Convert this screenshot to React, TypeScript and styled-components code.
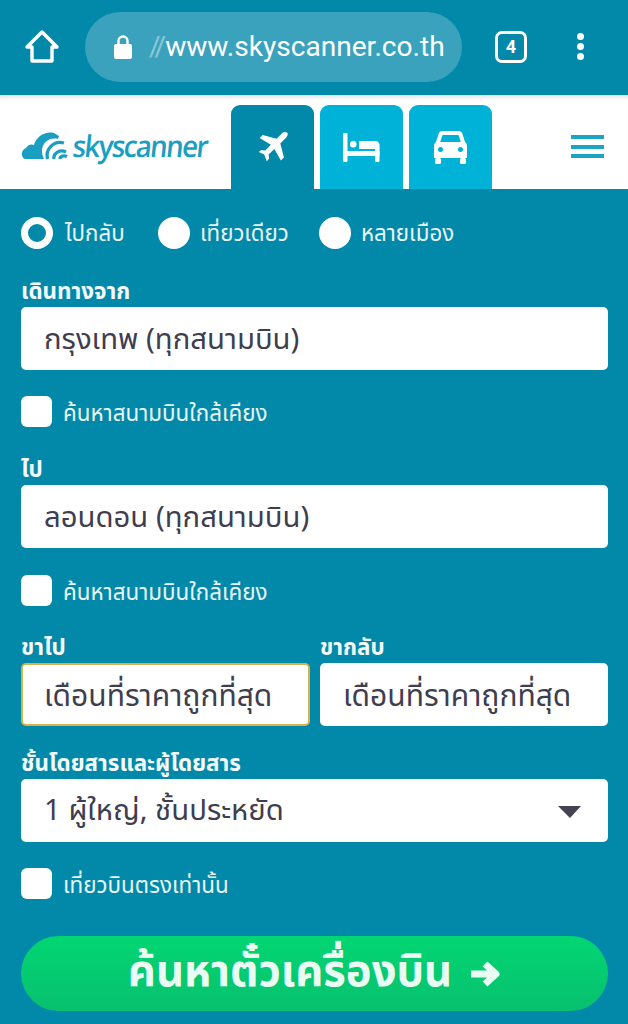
import React from "react";
import styled, { createGlobalStyle } from "styled-components";

const FONT = `"Noto Sans Thai", "Noto Sans Thai UI", "Noto Sans", "Open Sans", "DejaVu Sans", sans-serif`;

const Global = createGlobalStyle`
  html, body { margin: 0; padding: 0; background: #0289a9; }
  * { box-sizing: border-box; }
  body { font-family: ${FONT}; }
`;

const Page = styled.div`
  width: 628px;
  height: 1024px;
  overflow: hidden;
  background: #0289a9;
  display: flex;
  flex-direction: column;
`;

const BrowserBar = styled.div`
  height: 95px;
  flex: none;
  display: flex;
  align-items: center;
  padding: 0 0 2px 24px;
  background: #0289a9;
  color: #fff;
`;

const HomeSlot = styled.div`
  width: 36px;
  height: 36px;
  flex: none;
  margin-right: 25px;
`;

const UrlPill = styled.div`
  width: 377px;
  height: 70px;
  flex: none;
  border-radius: 35px;
  background: #3aa2bc;
  display: flex;
  align-items: center;
  padding-left: 28px;
  font: 400 28.1px "Roboto", sans-serif;
  color: #fff;
  white-space: nowrap;
`;

const Fade = styled.span`
  opacity: 0.4;
  margin-left: 16px;
  letter-spacing: -3px;
  margin-right: 2px;
`;

const TabCount = styled.div`
  width: 32px;
  height: 32px;
  flex: none;
  margin-left: 33px;
  border: 3px solid #fff;
  border-radius: 7px;
  display: flex;
  align-items: center;
  justify-content: center;
  font: 700 18px "Roboto", sans-serif;
`;

const Dots = styled.div`
  margin-left: 50px;
  display: flex;
  flex-direction: column;
  gap: 3px;
`;

const Dot = styled.span`
  width: 7px;
  height: 7px;
  border-radius: 50%;
  background: #fff;
`;

const Header = styled.header`
  height: 94px;
  flex: none;
  background: #fff;
  box-shadow: inset 0 6px 5px -4px rgba(0, 0, 0, 0.14);
  display: flex;
  align-items: flex-end;
  padding-left: 21px;
`;

const Logo = styled.div`
  width: 189px;
  height: 94px;
  flex: none;
  margin-right: 21px;
  display: flex;
  align-items: center;
  color: #1a9fc2;
`;

const LogoMark = styled.svg`
  flex: none;
  margin-top: 8px;
`;

const LogoText = styled.span`
  font: 600 30px "Open Sans", sans-serif;
  letter-spacing: -1.75px;
  margin-left: 3px;
  margin-top: 7px;
  transform-origin: left center;
  transform: skewX(-6deg) scaleX(0.92);
`;

const Tabs = styled.nav`
  display: flex;
  gap: 6px;
`;

const Tab = styled.div<{ $active?: boolean }>`
  width: 83px;
  height: 84px;
  border-radius: 9px 9px 0 0;
  background: ${(p) => (p.$active ? "#0289a9" : "#00b1d8")};
  display: flex;
  align-items: center;
  justify-content: center;
`;

const Burger = styled.div`
  margin-left: auto;
  margin-right: 24px;
  margin-bottom: 31px;
  display: flex;
  flex-direction: column;
  gap: 5.5px;
`;

const BurgerLine = styled.span`
  width: 33px;
  height: 4px;
  background: #1aa5c5;
`;

const Form = styled.main`
  flex: 1;
  display: flex;
  flex-direction: column;
  padding: 29px 20px 0 21px;
  color: #fff;
`;

const RadioRow = styled.div`
  display: flex;
  height: 30px;
  align-items: center;
`;

const RadioItem = styled.div<{ $width: number }>`
  width: ${(p) => p.$width}px;
  display: flex;
  align-items: center;
  gap: 10px;
`;

const Radio = styled.span<{ $on?: boolean }>`
  width: 32px;
  height: 32px;
  flex: none;
  border-radius: 50%;
  background: ${(p) => (p.$on ? "#0289a9" : "#fff")};
  border: ${(p) => (p.$on ? "7px solid #fff" : "none")};
`;

const OptionText = styled.span<{ $shift?: number }>`
  font: 400 22.3px/30px ${FONT};
  color: #e9f5f8;
  white-space: nowrap;
  padding-top: 2px;
  padding-left: ${(p) => p.$shift ?? 0}px;
`;

const FieldLabel = styled.label<{ $top: number }>`
  display: block;
  margin-top: ${(p) => p.$top}px;
  height: 29px;
  padding-top: 1px;
  font: 700 22.4px/26px ${FONT};
  color: #f2fafc;
  white-space: nowrap;
`;

const Input = styled.div<{ $focus?: boolean }>`
  height: 63px;
  background: #fff;
  border-radius: 5px;
  border: ${(p) => (p.$focus ? "2px solid #d8b24a" : "none")};
  display: flex;
  align-items: center;
  justify-content: space-between;
  padding: 5px 30px 0 ${(p) => (p.$focus ? 22 : 23)}px;
  font: 400 29.3px/1 ${FONT};
  color: #3f3e4f;
  white-space: nowrap;
`;

const DateInput = styled(Input)`
  font-size: 30px;
  padding-left: ${(p) => (p.$focus ? 21 : 23)}px;
`;

const SelectInput = styled(Input)`
  padding-top: 2px;
`;

const CheckRow = styled.div<{ $top: number }>`
  margin-top: ${(p) => p.$top}px;
  height: 31px;
  display: flex;
  align-items: center;
  gap: 11px;
`;

const Check = styled.span`
  width: 31px;
  height: 31px;
  flex: none;
  background: #fff;
  border-radius: 6px;
`;

const CheckText = styled.span`
  font: 400 22.4px/31px ${FONT};
  color: #e9f5f8;
  white-space: nowrap;
  padding-top: 6px;
`;

const DateGrid = styled.div`
  display: grid;
  grid-template-columns: 289px 288px;
  column-gap: 10px;
  margin-top: 32px;
`;

const DateCol = styled.div`
  display: flex;
  flex-direction: column;
`;

const DateLabel = styled(FieldLabel)`
  margin-top: 0;
  height: 25px;
  line-height: 18px;
`;

const Caret = styled.span`
  width: 0;
  height: 0;
  border-left: 12px solid transparent;
  border-right: 11px solid transparent;
  border-top: 12px solid #44434f;
  margin-right: -3px;
`;

const SearchButton = styled.button`
  margin-top: 37px;
  height: 75px;
  border: none;
  border-radius: 38px;
  background: linear-gradient(180deg, #02d672 0%, #08c06f 100%);
  color: #eafbf3;
  font: 700 43.5px/1 ${FONT};
  display: flex;
  align-items: center;
  justify-content: center;
  gap: 17px;
  padding: 0;
`;

const Home = () => (
  <svg width="36" height="36" viewBox="0 0 36 36" fill="none" stroke="#fff" strokeWidth="3.4" strokeLinejoin="round">
    <path d="M18 3 L33 18 H28 V32 H8 V18 H3 Z" />
  </svg>
);

const Lock = () => (
  <svg width="20" height="26" viewBox="0 0 20 26" fill="#fff">
    <path d="M5.5 10V7a4.5 4.5 0 0 1 9 0v3" fill="none" stroke="#fff" strokeWidth="2.4" />
    <rect x="1" y="10" width="18" height="15" rx="2" />
  </svg>
);

const CloudLogo = () => (
  <LogoMark width="49" height="30" viewBox="0 0 49 30" fill="none">
    <path d="M5 28C0 28-1 19 5 17c2-4 6-4 8-3 2-8 11-14 20-12l5 3-1 3c-8-2-16 3-16 12 0 3 1 6 2 8Z" fill="#1a9fc2" />
    <path d="M26.500 28C24 18 33 9 43 12" stroke="#1a9fc2" strokeWidth="3.300" />
    <path d="M33 28c-1-6 6-10 12-7" stroke="#1a9fc2" strokeWidth="3.300" />
    <path d="M39 28c0-3 4-4 7-2.500" stroke="#1a9fc2" strokeWidth="3.300" />
  </LogoMark>
);

const Plane = () => (
  <svg width="32" height="34" viewBox="0 0 24 24" fill="#fff">
    <path d="M22.600 1.400c-1-1-2.700-.8-3.800.3L14.700 5.800 4.300 3 2 5.300l8.400 5.100-4.200 4.300-3-.5L1.400 15.700l4 2 1.900 4.900 1.800-1.800-.4-3.100 4.300-4.200 4.900 8.700 2.300-2.300-2.700-10.600 4.100-4.100c1.200-1.200 2-3.100 1-3.800Z" />
  </svg>
);

const Bed = () => (
  <svg width="37" height="29" viewBox="0 0 37 29" fill="#fff">
    <rect x="0" y="0" width="4.500" height="29" rx="1" />
    <rect x="32" y="14" width="4.500" height="15" rx="1" />
    <rect x="0" y="18" width="36.500" height="5" />
    <rect x="7" y="8" width="6.500" height="6.500" rx="3" />
    <path d="M16 8h16a4 4 0 0 1 4.500 4v4H16Z" />
  </svg>
);

const Car = () => (
  <svg width="33" height="33" viewBox="0 0 33 33" fill="#fff">
    <path fillRule="evenodd" d="M8 0h17c1.500 0 2.800 1 3.300 2.400L31 11c1.300 1 2 2.300 2 4v12H0V15c0-1.700.7-3 2-4l2.700-8.600C5.200 1 6.500 0 8 0Zm.5 4L6.200 11h20.600l-2.300-7ZM6.500 16a2.500 2.500 0 1 0 0 5 2.500 2.500 0 0 0 0-5Zm20 0a2.500 2.500 0 1 0 0 5 2.500 2.500 0 0 0 0-5Z" />
    <rect x="1" y="27" width="6" height="6" rx="1.500" />
    <rect x="26" y="27" width="6" height="6" rx="1.500" />
  </svg>
);

const Arrow = () => (
  <svg width="32" height="28" viewBox="0 0 32 28" fill="none" stroke="#eafbf3" strokeWidth="7" strokeLinejoin="round">
    <path d="M2 14h25M16 4 27 14 16 24" />
  </svg>
);

export default function App() {
  return (
    <Page>
      <Global />
      <BrowserBar>
        <HomeSlot><Home /></HomeSlot>
        <UrlPill>
          <Lock />
          <Fade>//</Fade>www.skyscanner.co.th
        </UrlPill>
        <TabCount>4</TabCount>
        <Dots><Dot /><Dot /><Dot /></Dots>
      </BrowserBar>
      <Header>
        <Logo>
          <CloudLogo />
          <LogoText>skyscanner</LogoText>
        </Logo>
        <Tabs>
          <Tab $active><Plane /></Tab>
          <Tab><Bed /></Tab>
          <Tab><Car /></Tab>
        </Tabs>
        <Burger>
          <BurgerLine /><BurgerLine /><BurgerLine />
        </Burger>
      </Header>
      <Form>
        <RadioRow>
          <RadioItem $width={137}><Radio $on /><OptionText $shift={2}>ไปกลับ</OptionText></RadioItem>
          <RadioItem $width={161}><Radio /><OptionText>เที่ยวเดียว</OptionText></RadioItem>
          <RadioItem $width={160}><Radio /><OptionText>หลายเมือง</OptionText></RadioItem>
        </RadioRow>
        <FieldLabel $top={30}>เดินทางจาก</FieldLabel>
        <Input>กรุงเทพ (ทุกสนามบิน)</Input>
        <CheckRow $top={26}><Check /><CheckText>ค้นหาสนามบินใกล้เคียง</CheckText></CheckRow>
        <FieldLabel $top={29}>ไป</FieldLabel>
        <Input>ลอนดอน (ทุกสนามบิน)</Input>
        <CheckRow $top={27}><Check /><CheckText>ค้นหาสนามบินใกล้เคียง</CheckText></CheckRow>
        <DateGrid>
          <DateCol>
            <DateLabel $top={0}>ขาไป</DateLabel>
            <DateInput $focus>เดือนที่ราคาถูกที่สุด</DateInput>
          </DateCol>
          <DateCol>
            <DateLabel $top={0}>ขากลับ</DateLabel>
            <DateInput>เดือนที่ราคาถูกที่สุด</DateInput>
          </DateCol>
        </DateGrid>
        <FieldLabel $top={24}>ชั้นโดยสารและผู้โดยสาร</FieldLabel>
        <SelectInput>1 ผู้ใหญ่, ชั้นประหยัด<Caret /></SelectInput>
        <CheckRow $top={26}><Check /><CheckText>เที่ยวบินตรงเท่านั้น</CheckText></CheckRow>
        <SearchButton>ค้นหาตั๋วเครื่องบิน <Arrow /></SearchButton>
      </Form>
    </Page>
  );
}
